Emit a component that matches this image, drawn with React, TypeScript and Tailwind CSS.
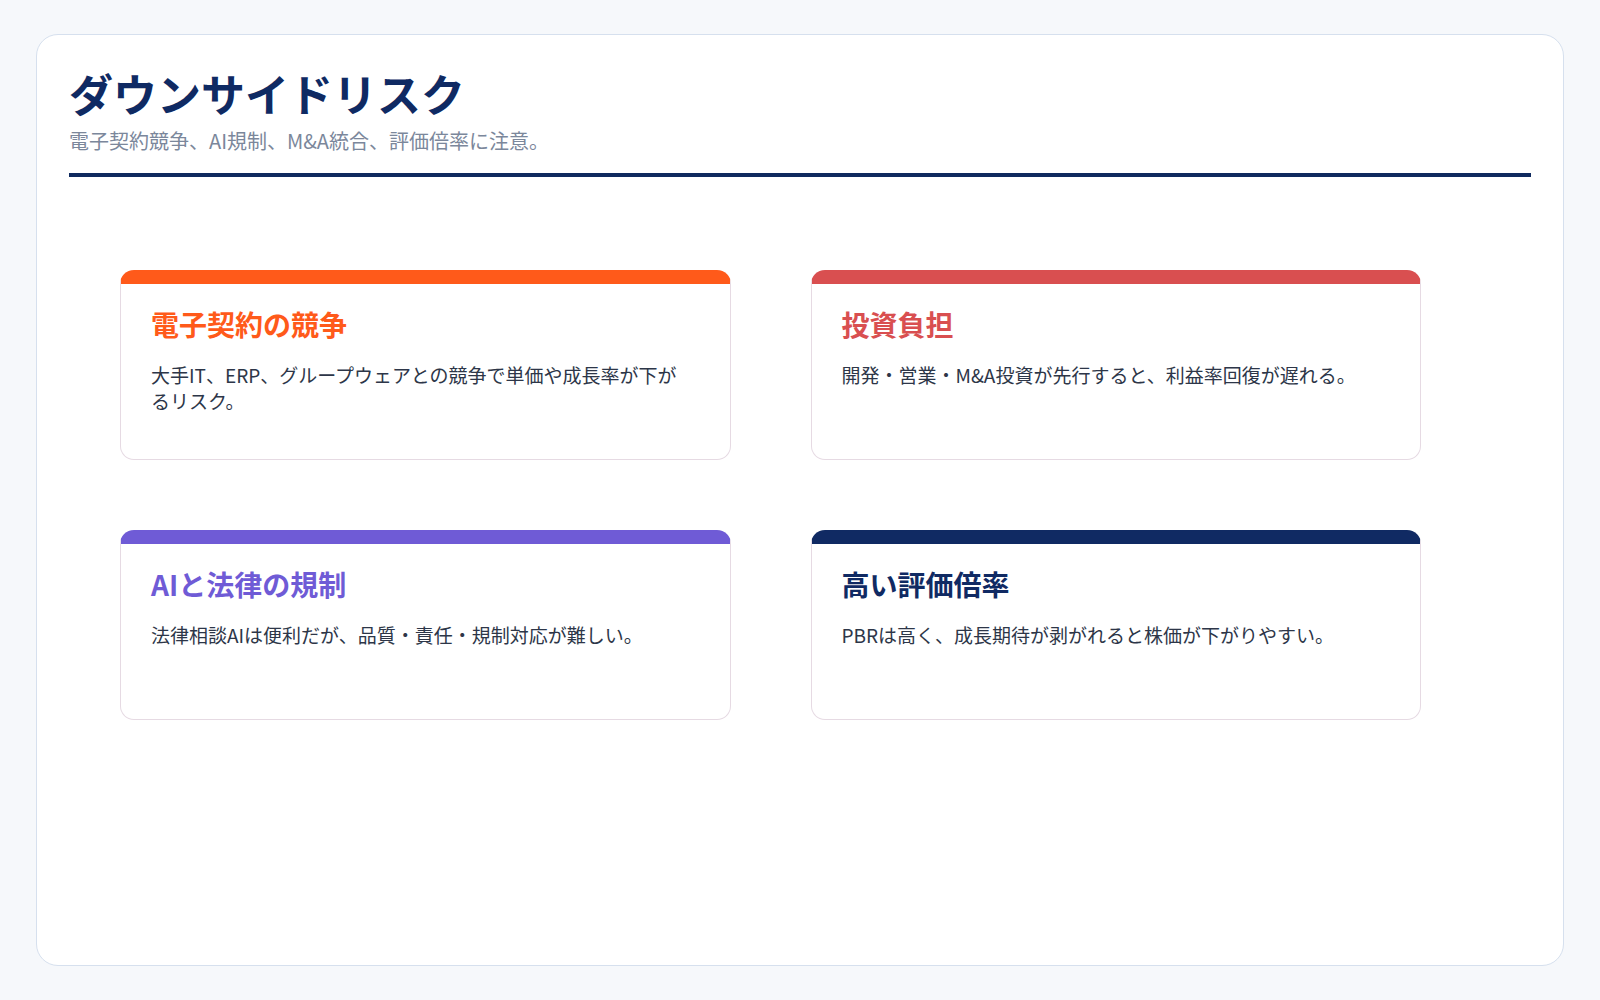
import React from "react";

const cards = [
  {
    title: "電子契約の競争",
    body: "大手IT、ERP、グループウェアとの競争で単価や成長率が下がるリスク。",
    bar: "border-t-[#ff5a1a]",
    text: "text-[#ff5a1a]",
  },
  {
    title: "投資負担",
    body: "開発・営業・M&A投資が先行すると、利益率回復が遅れる。",
    bar: "border-t-[#d94f50]",
    text: "text-[#d94f50]",
  },
  {
    title: "AIと法律の規制",
    body: "法律相談AIは便利だが、品質・責任・規制対応が難しい。",
    bar: "border-t-[#6f5bd6]",
    text: "text-[#6f5bd6]",
  },
  {
    title: "高い評価倍率",
    body: "PBRは高く、成長期待が剥がれると株価が下がりやすい。",
    bar: "border-t-[#102a63]",
    text: "text-[#102a63]",
  },
];

export default function App() {
  return (
    <div
      className="h-[1000px] w-full bg-[#f6f8fb] px-[36px] py-[34px]"
      style={{ fontFamily: '"Noto Sans CJK JP", "Noto Sans", sans-serif' }}
    >
      <div className="h-full rounded-[22px] border-[1.5px] border-[#d6e0ee] bg-white px-8 pt-8">
        <div className="border-b-4 border-[#0f2a5f] pb-[17px]">
          <h1 className="text-[44px] font-bold leading-[53px] text-[#0f2a63]">
            ダウンサイドリスク
          </h1>
          <p className="mt-[6px] text-[20px] leading-[30px] text-[#7b879b]">
            電子契約競争、AI規制、M&amp;A統合、評価倍率に注意。
          </p>
        </div>
        <div className="ml-[51px] mt-[93px] grid w-[1301px] grid-cols-2 gap-x-[80px] gap-y-[70px]">
          {cards.map((c) => (
            <div
              key={c.title}
              className={`h-[190px] rounded-[14px] border border-t-[14px] border-[#e6dae3] bg-white pl-[30px] pr-[48px] pt-[22px] ${c.bar}`}
            >
              <h2 className={`text-[28px] font-bold leading-[36px] ${c.text}`}>{c.title}</h2>
              <p className="mt-[20px] text-[19px] leading-[26px] text-[#2d3648]">{c.body}</p>
            </div>
          ))}
        </div>
      </div>
    </div>
  );
}
